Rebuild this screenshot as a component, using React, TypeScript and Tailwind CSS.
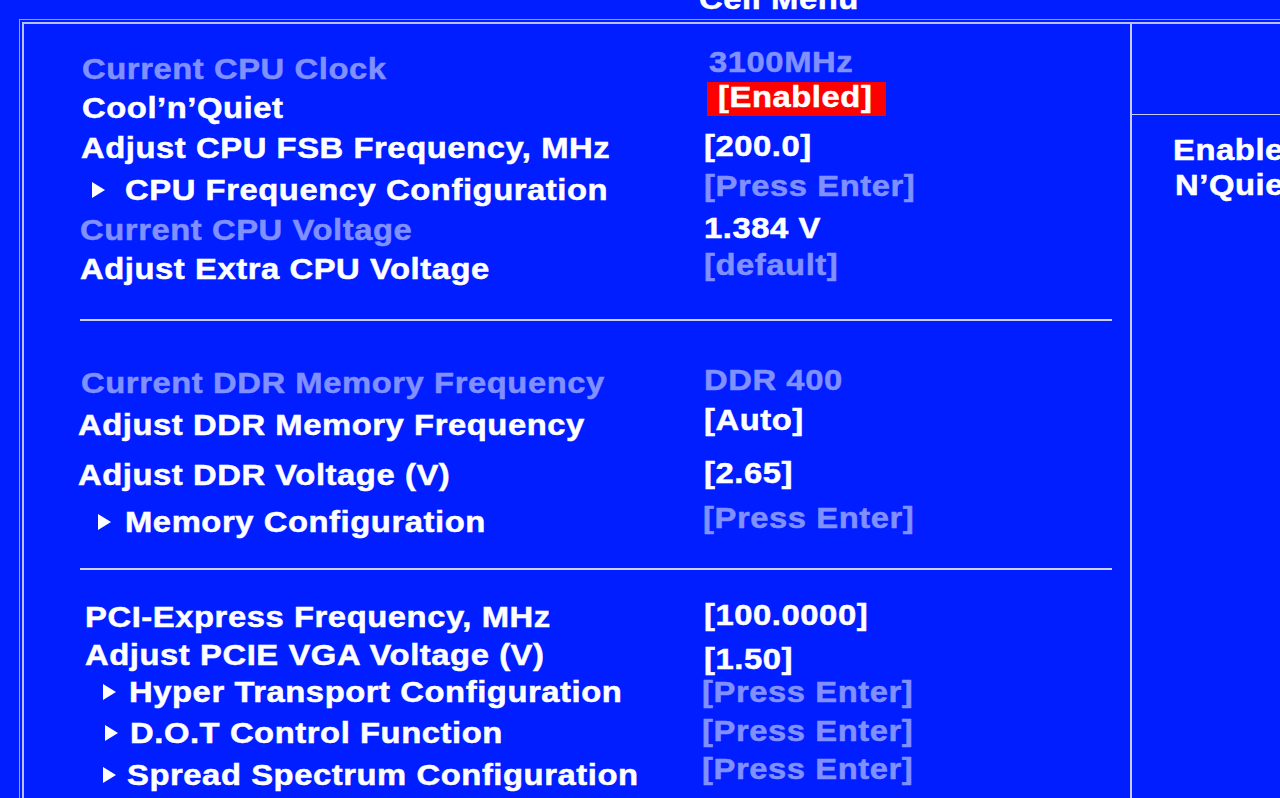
import React from "react";

type Row = {
  label: string;
  value: string;
  dimLabel?: boolean;
  dimValue?: boolean;
  arrow?: boolean;
  red?: boolean;
  h: string;
  pad: string;
  lmt: string;
  vml: string;
  vmt: string;
  arrowGap?: string;
};

const WHITE = "text-white";
const DIM = "text-[#8190ff]";
// the BIOS font is a wide, heavy sans: stretch Arial-metric bold sideways
const WIDE =
  "inline-block origin-left scale-x-[1.13] whitespace-nowrap [-webkit-text-stroke-width:0.5px]";

const cpuRows: Row[] = [
  { label: "Current CPU Clock", value: "3100MHz", dimLabel: true, dimValue: true, h: "h-[35px]", pad: "pl-[58px]", lmt: "mt-[7px]", vml: "ml-[5px]", vmt: "mt-0" },
  { label: "Cool’n’Quiet", value: "[Enabled]", red: true, h: "h-[49px]", pad: "pl-[58px]", lmt: "mt-[11px]", vml: "ml-[3px]", vmt: "mt-[2px]" },
  { label: "Adjust CPU FSB Frequency, MHz", value: "[200.0]", h: "h-[40px]", pad: "pl-[57px]", lmt: "mt-[2px]", vml: "ml-0", vmt: "mt-0" },
  { label: "CPU Frequency Configuration", value: "[Press Enter]", arrow: true, dimValue: true, h: "h-[42px]", pad: "pl-[68px]", lmt: "mt-[4px]", vml: "ml-0", vmt: "mt-0", arrowGap: "mr-[20px]" },
  { label: "Current CPU Voltage", value: "1.384 V", dimLabel: true, h: "h-[37px]", pad: "pl-[56px]", lmt: "mt-[2px]", vml: "ml-0", vmt: "mt-0" },
  { label: "Adjust Extra CPU Voltage", value: "[default]", dimValue: true, h: "h-[40px]", pad: "pl-[56px]", lmt: "mt-[4px]", vml: "ml-0", vmt: "mt-0" },
];

const memRows: Row[] = [
  { label: "Current DDR Memory Frequency", value: "DDR 400", dimLabel: true, dimValue: true, h: "h-[40px]", pad: "pl-[57px]", lmt: "mt-[3px]", vml: "ml-0", vmt: "mt-0" },
  { label: "Adjust DDR Memory Frequency", value: "[Auto]", h: "h-[53px]", pad: "pl-[54px]", lmt: "mt-[5px]", vml: "ml-0", vmt: "mt-0" },
  { label: "Adjust DDR Voltage (V)", value: "[2.65]", h: "h-[45px]", pad: "pl-[54px]", lmt: "mt-[2px]", vml: "ml-0", vmt: "mt-0" },
  { label: "Memory Configuration", value: "[Press Enter]", arrow: true, dimValue: true, h: "h-[40px]", pad: "pl-[74px]", lmt: "mt-[4px]", vml: "ml-[-1px]", vmt: "mt-0", arrowGap: "mr-[14px]" },
];

const pciRows: Row[] = [
  { label: "PCI-Express Frequency, MHz", value: "[100.0000]", h: "h-[40px]", pad: "pl-[61px]", lmt: "mt-[2px]", vml: "ml-0", vmt: "mt-0" },
  { label: "Adjust PCIE VGA Voltage (V)", value: "[1.50]", h: "h-[37px]", pad: "pl-[61px]", lmt: "mt-0", vml: "ml-0", vmt: "mt-[4px]" },
  { label: "Hyper Transport Configuration", value: "[Press Enter]", arrow: true, dimValue: true, h: "h-[39px]", pad: "pl-[79px]", lmt: "mt-0", vml: "ml-[-2px]", vmt: "mt-0", arrowGap: "mr-[13px]" },
  { label: "D.O.T Control Function", value: "[Press Enter]", arrow: true, dimValue: true, h: "h-[38px]", pad: "pl-[81px]", lmt: "mt-[2px]", vml: "ml-[-2px]", vmt: "mt-0", arrowGap: "mr-[12px]" },
  { label: "Spread Spectrum Configuration", value: "[Press Enter]", arrow: true, dimValue: true, h: "h-[46px]", pad: "pl-[79px]", lmt: "mt-[6px]", vml: "ml-[-2px]", vmt: "mt-0", arrowGap: "mr-[11px]" },
];

function Arrow({ gap }: { gap?: string }) {
  return (
    <svg className={`w-[13px] h-[16px] shrink-0 ${gap ?? ""}`} viewBox="0 0 13 16">
      <path d="M0 0 L13 8 L0 16 Z" fill="#ffffff" />
    </svg>
  );
}

function SetupRow({ row }: { row: Row }) {
  return (
    <div className={`flex items-start shrink-0 ${row.h}`}>
      <div className={`w-[680px] shrink-0 flex items-center ${row.pad} ${row.lmt}`}>
        {row.arrow && <Arrow gap={row.arrowGap} />}
        <span className={`${WIDE} ${row.dimLabel ? DIM : WHITE}`}>{row.label}</span>
      </div>
      <div className={`flex ${row.vml} ${row.vmt}`}>
        {row.red ? (
          <div className="w-[179px] h-[34px] pl-[11px] bg-[#ff0000] text-white leading-[31px]">
            <span className={WIDE}>{row.value}</span>
          </div>
        ) : (
          <span className={`${WIDE} ${row.dimValue ? DIM : WHITE}`}>{row.value}</span>
        )}
      </div>
    </div>
  );
}

function Divider({ block, top }: { block: string; top: string }) {
  return (
    <div className={`shrink-0 ${block}`}>
      <div className={`ml-[56px] w-[1032px] h-[2px] bg-[#c9d1ff] ${top}`} />
    </div>
  );
}

export default function App() {
  return (
    <div
      className="w-[1280px] h-[798px] overflow-hidden bg-[#001eff] flex flex-col font-bold text-[29px] leading-[34px] tracking-[0.5px]"
      style={{ fontFamily: '"Liberation Sans", Arial, sans-serif' }}
    >
      {/* Title, mostly scrolled off the top */}
      <div className="h-[19px] shrink-0 pl-[699px]">
        <div className="-mt-[18px] text-white">
          <span className={WIDE}>Cell Menu</span>
        </div>
      </div>

      {/* Double-line frame */}
      <div className="ml-[19px] flex-1 border-t border-l border-[#8e9bff] pt-[2px] pl-[2px] flex">
        <div className="flex-1 border-t-2 border-l-2 border-[#b7c1ff] flex">
          {/* Left: settings */}
          <div className="w-[1106px] shrink-0 flex flex-col pt-[21px]">
            {cpuRows.map((r) => (
              <SetupRow key={r.label} row={r} />
            ))}
            <Divider block="h-[75px]" top="mt-[31px]" />
            {memRows.map((r) => (
              <SetupRow key={r.label} row={r} />
            ))}
            <Divider block="h-[57px]" top="mt-[27px]" />
            {pciRows.map((r) => (
              <SetupRow key={r.label} row={r} />
            ))}
          </div>

          {/* Right: help panel */}
          <div className="flex-1 border-l-2 border-[#c3cbff] flex flex-col">
            <div className="h-[91px] shrink-0 border-b border-[#c3cbff]" />
            <div className="pl-[41px] pt-[18px] text-white leading-[35px]">
              <div>
                <span className={WIDE}>Enable/Disable Cool</span>
              </div>
              <div className="pl-[2px]">
                <span className={WIDE}>N’Quiet function</span>
              </div>
            </div>
          </div>
        </div>
      </div>
    </div>
  );
}
